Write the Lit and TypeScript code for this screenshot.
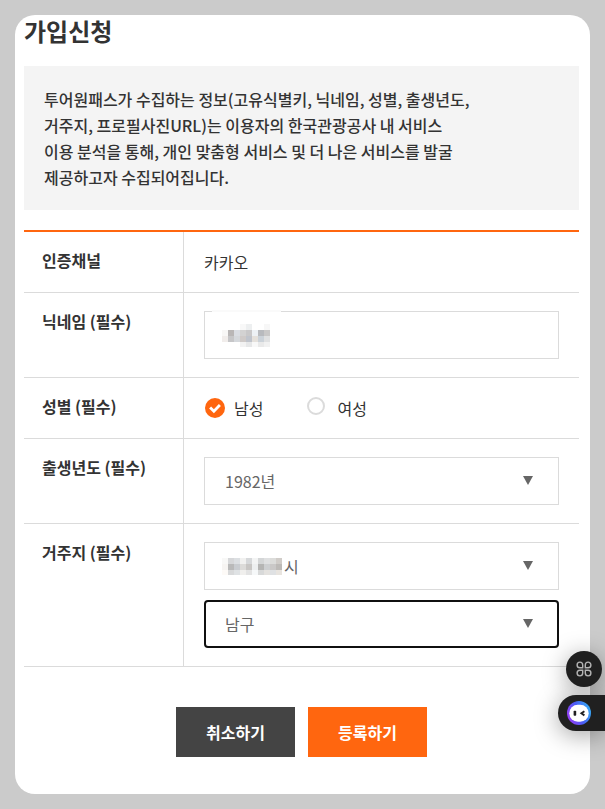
import { LitElement, html, css, svg } from "lit";
import { customElement } from "lit/decorators.js";

const NAME_MASK = [
  ["#ffffff", "#ffffff", "#ffffff", "#f8f8f8", "#edeff0", "#ffffff", "#ffffff", "#f7f7f7"],
  ["#f8f7f6", "#b9b6b6", "#dadde3", "#d3d2d2", "#c9c8c9", "#edf1f5", "#b8babe", "#c9c8c8"],
  ["#f1edeb", "#c6c6c8", "#d5d8dc", "#cfcac8", "#c0c4cc", "#e5e1dc", "#cbd2d9", "#e0e1e2"],
  ["#ffffff", "#ffffff", "#ffffff", "#f2f2f2", "#e6e7e8", "#f8f8f8", "#e9e9e9", "#f1f1f1"],
];
const CITY_MASK = [
  ["#f8f8f7", "#d6d7d9", "#dcdfe2", "#f1f1f0", "#d6d8da", "#f3f4f4", "#d4d6d7", "#dfe0e1", "#dcdcda", "#d0ccc8"],
  ["#f6f4f2", "#b9b9b9", "#c9ccd0", "#dcdbd9", "#c8c6c4", "#edeff0", "#b5b5b4", "#cdcfd1", "#cac8c7", "#bdbab7"],
  ["#fdfaf7", "#d8d9da", "#dfe2e4", "#f0efed", "#e3e3e3", "#f6f8f9", "#d8d9d9", "#e4e2df", "#dfe1e3", "#e8e4df"],
];

const mosaic = (rows: string[][], h: number, heights: number[]) => {
  let y = 0;
  return html`<svg class="mosaic" width=${rows[0].length * 6} height=${h} shape-rendering="crispEdges" aria-hidden="true">
    ${rows.map((r, i) => {
      const top = y;
      y += heights[i];
      return r.map((c, j) => svg`<rect x=${j * 6} y=${top} width="6" height=${heights[i]} fill=${c}></rect>`);
    })}
  </svg>`;
};

@customElement("app-root")
export class AppRoot extends LitElement {
  static styles = css`
    :host {
      display: block;
      box-sizing: border-box;
      height: 809px;
      padding: 15px;
      background: #cbcbcb;
      color: #333;
      font: 400 16px/26px "Noto Sans CJK KR", sans-serif;
      overflow: hidden;
    }
    * { box-sizing: border-box; }
    .card {
      height: 779px;
      padding: 0 11px 0 9px;
      background: #fff;
      border-radius: 20px;
    }
    h1 {
      margin: 0;
      height: 51px;
      font-size: 24px;
      line-height: 31px;
      font-weight: 700;
    }
    .notice {
      margin: 0 0 20px;
      height: 144px;
      padding: 20px;
      background: #f4f4f4;
      font-weight: 500;
      white-space: nowrap;
    }
    .form { border-top: 2px solid #ff660f; }
    .row {
      display: grid;
      grid-template-columns: 160px 1fr;
      border-bottom: 1px solid #dbdbdb;
    }
    .label {
      padding: 15px 18px;
      border-right: 1px solid #dbdbdb;
      font-weight: 700;
    }
    .value {
      display: flex;
      flex-direction: column;
      gap: 10px;
      padding: 18px 20px;
    }
    .value.plain { padding-top: 17px; height: 60px; }
    .value.radios {
      flex-direction: row;
      gap: 0;
      height: 60px;
      padding-top: 17px;
    }
    .field {
      display: flex;
      align-items: center;
      height: 48px;
      padding: 0 25px 0 20px;
      border: 1px solid #dbdbdb;
      color: #666;
    }
    .field.focus {
      border: 2px solid #101010;
      border-radius: 4px;
      padding: 0 24px 0 19px;
    }
    .field.name { position: relative; }
    .field.name::before {
      content: "";
      position: absolute;
      left: 7px;
      top: -2px;
      width: 69px;
      height: 2px;
      background: #fafafa;
    }
    .mosaic { display: block; margin: 0 2px 0 -3px; }
    .name .mosaic { margin-top: 1px; }
    .arrow { margin: -2px 0 0 auto; }
    .radio { display: flex; align-items: flex-start; }
    .radio svg { margin-right: 8px; }
    .on svg { margin-top: 2px; }
    .off { margin-left: 43px; }
    .off svg { margin-right: 11px; }
    .actions {
      display: flex;
      gap: 13px;
      margin: 40px 0 0 152px;
    }
    button {
      width: 119px;
      height: 50px;
      padding: 0;
      border: 0;
      background: #444;
      color: #fff;
      font: 700 16px/50px "Noto Sans CJK KR", sans-serif;
    }
    .primary { background: #ff660f; }
    .float {
      position: absolute;
      display: flex;
      align-items: center;
      background: #202020;
      box-shadow: 0 4px 24px rgba(0, 0, 0, 0.36);
    }
    .command {
      left: 566px;
      top: 651px;
      width: 36px;
      height: 36px;
      justify-content: center;
      border-radius: 50%;
    }
    .assistant {
      left: 558px;
      top: 695px;
      width: 47px;
      height: 36px;
      padding-left: 9px;
      border-radius: 18px 0 0 18px;
    }
  `;

  arrow() {
    return html`<svg class="arrow" width="10" height="9" viewBox="0 0 10 9"><path d="M0 0h10L5 9z" fill="#666" /></svg>`;
  }

  render() {
    return html`
      <main class="card">
        <h1>가입신청</h1>
        <p class="notice">
          투어원패스가 수집하는 정보(고유식별키, 닉네임, 성별, 출생년도,<br />
          거주지, 프로필사진URL)는 이용자의 한국관광공사 내 서비스<br />
          이용 분석을 통해, 개인 맞춤형 서비스 및 더 나은 서비스를 발굴<br />
          제공하고자 수집되어집니다.
        </p>
        <section class="form">
          <div class="row"><div class="label">인증채널</div><div class="value plain">카카오</div></div>
          <div class="row">
            <div class="label">닉네임 (필수)</div>
            <div class="value"><div class="field name">${mosaic(NAME_MASK, 23, [6, 6, 6, 5])}</div></div>
          </div>
          <div class="row">
            <div class="label">성별 (필수)</div>
            <div class="value radios">
              <div class="radio on">
                <svg width="22" height="22" viewBox="0 0 22 22">
                  <circle cx="11" cy="11" r="10" fill="#ff660f" />
                  <path d="M6.1 10.4l3.8 3.8 6-6.2" fill="none" stroke="#fff" stroke-width="2.8" />
                </svg>남성
              </div>
              <div class="radio off">
                <svg width="20" height="22" viewBox="0 0 20 22">
                  <circle cx="10" cy="11" r="8" fill="none" stroke="#dbdbdb" stroke-width="2" />
                </svg>여성
              </div>
            </div>
          </div>
          <div class="row">
            <div class="label">출생년도 (필수)</div>
            <div class="value"><div class="field">1982년${this.arrow()}</div></div>
          </div>
          <div class="row">
            <div class="label">거주지 (필수)</div>
            <div class="value">
              <div class="field">${mosaic(CITY_MASK, 17, [6, 6, 5])}시${this.arrow()}</div>
              <div class="field focus">남구${this.arrow()}</div>
            </div>
          </div>
        </section>
        <div class="actions"><button>취소하기</button><button class="primary">등록하기</button></div>
      </main>
      <div class="float command">
        <svg width="18" height="18" viewBox="0 0 18 18" fill="none" stroke="#b4b4b4" stroke-width="1.4">
          <path d="M7.7 7.7H4.9a2.8 2.8 0 1 1 2.8-2.8zM10.3 7.7V4.9a2.8 2.8 0 1 1 2.8 2.8zM7.7 10.3v2.8a2.8 2.8 0 1 1-2.8-2.8zM10.3 10.3h2.8a2.8 2.8 0 1 1-2.8 2.8z" />
        </svg>
      </div>
      <div class="float assistant">
        <svg width="24" height="24" viewBox="0 0 24 24">
          <defs>
            <linearGradient id="ring" x1="0" y1="0.7" x2="1" y2="0.3">
              <stop offset="0" stop-color="#9a3cf5" /><stop offset="0.5" stop-color="#4a5cf5" /><stop offset="1" stop-color="#35aef5" />
            </linearGradient>
          </defs>
          <circle cx="12" cy="12" r="12" fill="url(#ring)" />
          <rect x="2.3" y="3.8" width="19.4" height="17" rx="8.5" fill="#fff" />
          <rect x="6.6" y="9.8" width="2.6" height="5" rx="0.8" fill="#202020" />
          <path d="M17.4 10.2l-3 2.1 3 2.1" fill="none" stroke="#202020" stroke-width="1.9" />
        </svg>
      </div>
    `;
  }
}
